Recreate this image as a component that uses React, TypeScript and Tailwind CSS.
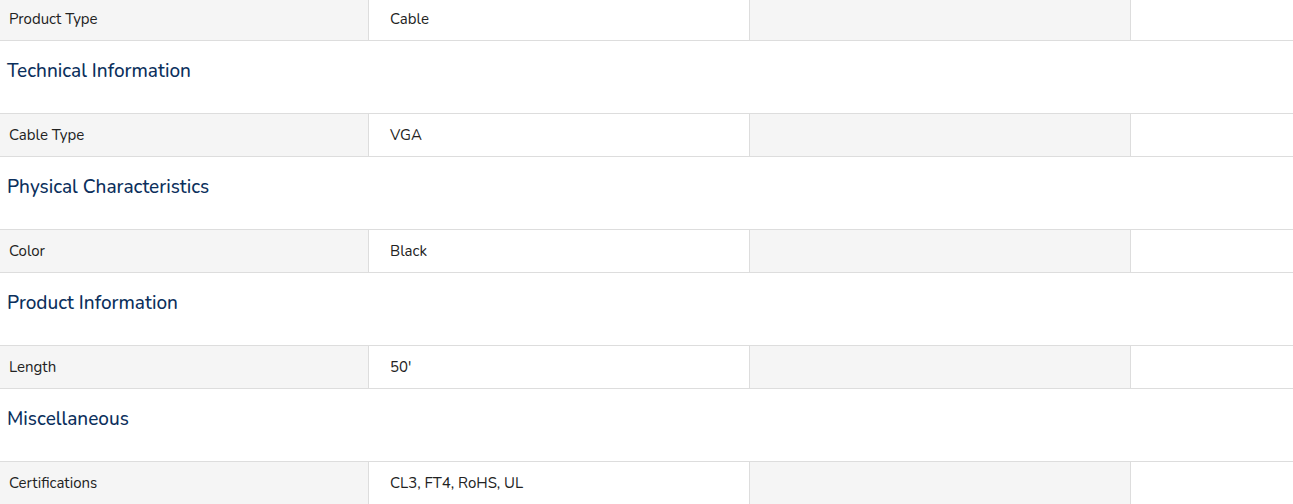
const sections = [
  { title: null, label: "Product Type", value: "Cable" },
  { title: "Technical Information", label: "Cable Type", value: "VGA" },
  { title: "Physical Characteristics", label: "Color", value: "Black" },
  { title: "Product Information", label: "Length", value: "50'" },
  { title: "Miscellaneous", label: "Certifications", value: "CL3, FT4, RoHS, UL" },
];

function SpecRow({ label, value }: { label: string; value: string }) {
  return (
    <div className="flex h-[44px] border-y border-[#dddddd] text-[15px] text-[#222222]">
      <div className="w-[369px] flex items-center pl-[9px] pt-[1px] bg-[#f5f5f5] border-r border-[#dddddd]">{label}</div>
      <div className="w-[381px] flex items-center pl-[21px] pt-[1px] bg-white border-r border-[#dddddd]">{value}</div>
      <div className="w-[381px] bg-[#f5f5f5] border-r border-[#dddddd]" />
      <div className="flex-1 bg-white" />
    </div>
  );
}

export default function App() {
  return (
    <div
      className="bg-white w-full h-[504px] overflow-hidden"
      style={{ fontFamily: "Nunito, 'Open Sans', sans-serif" }}
    >
      <div className="-mt-[3px]">
        {sections.map((s, i) => (
          <div key={i}>
            {s.title && (
              <h3 className="h-[72px] pl-[7px] pt-[18px] text-[19px] font-medium text-[#0b2f5c] leading-[24px]">
                {s.title}
              </h3>
            )}
            <SpecRow label={s.label} value={s.value} />
          </div>
        ))}
      </div>
    </div>
  );
}
